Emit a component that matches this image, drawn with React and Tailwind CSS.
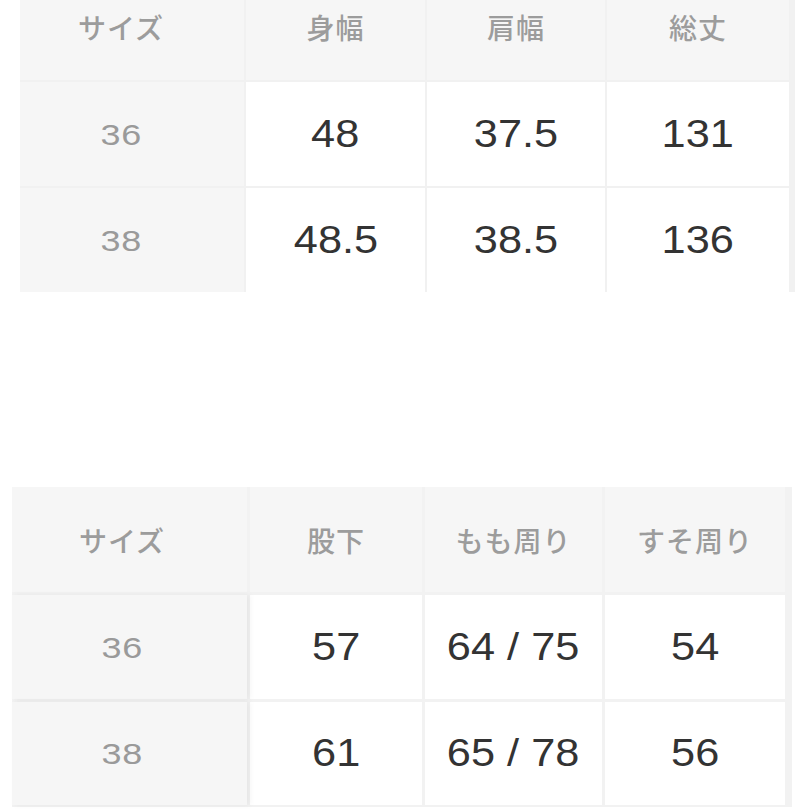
const font = { fontFamily: '"Liberation Sans", "Noto Sans CJK JP", sans-serif' };

const tables = [
  {
    head: ['サイズ', '身幅', '肩幅', '総丈'],
    rows: [
      ['36', '48', '37.5', '131'],
      ['38', '48.5', '38.5', '136'],
    ],
  },
  {
    head: ['サイズ', '股下', 'もも周り', 'すそ周り'],
    rows: [
      ['36', '57', '64 / 75', '54'],
      ['38', '61', '65 / 78', '56'],
    ],
  },
];

function HeadCell({ children, first, padRight }) {
  return (
    <div
      className={`flex items-center justify-center bg-[#f6f6f6] ${first ? padRight : ''}`}
    >
      <span
        className="text-[28px] font-medium tracking-[1px] text-[#9c9c9c]"
        style={{ fontFamily: '"Noto Sans CJK JP", sans-serif' }}
      >
        {children}
      </span>
    </div>
  );
}

function SizeTable({ table, gridClass, wrapClass, padRight, shadow }) {
  return (
    <div className={wrapClass}>
      <div className={gridClass}>
        {table.head.map((h, i) => (
          <HeadCell key={h + i} first={i === 0} padRight={padRight}>
            {h}
          </HeadCell>
        ))}
        {table.rows.map((row) =>
          row.map((cell, i) =>
            i === 0 ? (
              <div
                key={row[0] + i}
                className={`relative z-10 flex items-center justify-center bg-[#f6f6f6] ${padRight} ${shadow}`}
              >
                <span className="inline-block scale-x-[1.2] text-[30px] tracking-[0.5px] text-[#9a9a9a]">
                  {cell}
                </span>
              </div>
            ) : (
              <div key={row[0] + i} className="flex items-center justify-center bg-white">
                <span className="inline-block scale-x-[1.14] text-[38px] text-[#333333]">
                  {cell}
                </span>
              </div>
            )
          )
        )}
      </div>
    </div>
  );
}

export default function App() {
  return (
    <div className="h-[810px] w-[810px] overflow-hidden bg-white" style={font}>
      <SizeTable
        table={tables[0]}
        wrapClass="-mt-[27px] ml-[20px] w-[775px]"
        gridClass="grid grid-cols-[224px_179px_178px_182px] grid-rows-[107px_104px_104px] gap-[2px] bg-[#f1f1f1] pr-[3px]"
        padRight="pr-[22px]"
        shadow=""
      />
      <SizeTable
        table={tables[1]}
        wrapClass="mt-[195px] ml-[12px] w-[780px]"
        gridClass="grid grid-cols-[235px_172px_177px_180px] grid-rows-[105px_104px_103px] gap-[3px] bg-[#f2f2f2] pb-[2px] pr-[4px]"
        padRight="pr-[15px]"
        shadow="shadow-[3px_0_6px_rgba(0,0,0,0.05)]"
      />
    </div>
  );
}
